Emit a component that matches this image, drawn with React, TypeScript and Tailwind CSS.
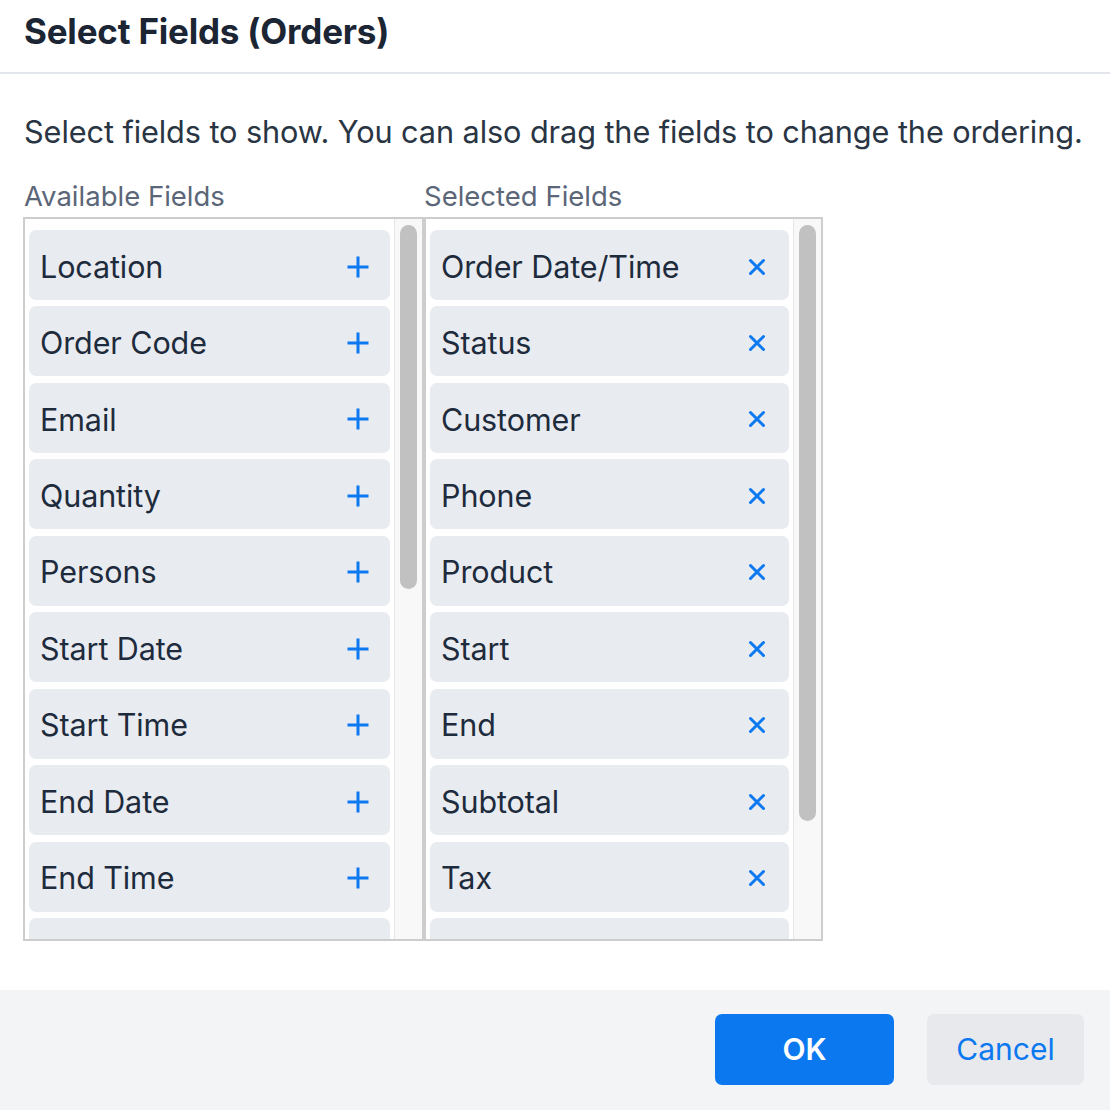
import React from "react";

const available = ["Location", "Order Code", "Email", "Quantity", "Persons", "Start Date", "Start Time", "End Date", "End Time", ""];
const selected = ["Order Date/Time", "Status", "Customer", "Phone", "Product", "Start", "End", "Subtotal", "Tax", ""];

function PlusIcon() {
  return (
    <svg width="24" height="24" viewBox="0 0 24 24" fill="none" stroke="#0d79f0" strokeWidth="3">
      <path d="M12 1.5v21M1.5 12h21" />
    </svg>
  );
}

function XIcon() {
  return (
    <svg width="18" height="18" viewBox="0 0 18 18" fill="none" stroke="#0d79f0" strokeWidth="3" strokeLinecap="round">
      <path d="M2.5 2.5l13 13M15.5 2.5l-13 13" />
    </svg>
  );
}

function FieldColumn({ items, kind, thumbH, width }: { items: string[]; kind: "add" | "remove"; thumbH: number; width: string }) {
  return (
    <div className={`${width} h-[724px] border-2 border-[#cdcdcd] flex overflow-hidden`}>
      <div className="flex-1 flex flex-col gap-[6.44px] pl-[4px] pr-[4px] pt-[11px]">
        {items.map((label, i) => (
          <div key={i} className="h-[70px] shrink-0 rounded-[7px] bg-[#e8ebf0] flex items-center justify-between pl-[11px] pr-[20px] pt-[3px]">
            <span className="text-[30.5px] text-[#1e2b3c] tracking-[-0.1px]">{label}</span>
            {label && (kind === "add" ? <span className="flex"><PlusIcon /></span> : <span className="pr-[3px] flex"><XIcon /></span>)}
          </div>
        ))}
      </div>
      <div className="w-[28px] shrink-0 bg-[#f8f8f8] border-l border-[#e6e6e6] pt-[6px] flex justify-center">
        <div className="w-[17px] rounded-full bg-[#c1c1c1]" style={{ height: thumbH }} />
      </div>
    </div>
  );
}

export default function App() {
  return (
    <div className="w-[1110px] h-[1110px] bg-white flex flex-col" style={{ fontFamily: "Inter, 'Noto Sans', sans-serif" }}>
      <div className="h-[74px] shrink-0 border-b-2 border-[#e3e6ea] flex items-center px-6 pb-[10px]">
        <h1 className="text-[35px] font-bold text-[#1b2533] tracking-[-0.2px]">Select Fields (Orders)</h1>
      </div>
      <div className="flex-1 px-6 pt-[38px]">
        <p className="text-[30.7px] text-[#2a3544] leading-[40px] tracking-[-0.1px]">
          Select fields to show. You can also drag the fields to change the ordering.
        </p>
        <div className="flex mt-[27px] text-[27.5px] text-[#5b6678] leading-[34px]">
          <div className="w-[400px]">Available Fields</div>
          <div>Selected Fields</div>
        </div>
        <div className="flex mt-[4px] -ml-[1px]">
          <FieldColumn items={available} kind="add" thumbH={364} width="w-[401px]" />
          <FieldColumn items={selected} kind="remove" thumbH={596} width="w-[399px]" />
        </div>
      </div>
      <div className="h-[120px] shrink-0 bg-[#f3f4f6] flex items-start justify-end gap-[33px] pt-[24px] pr-[26px]">
        <button className="w-[179px] h-[71px] rounded-[7px] bg-[#0c78f0] text-white text-[30px] font-semibold">OK</button>
        <button className="w-[157px] h-[71px] rounded-[7px] bg-[#e7e9ed] text-[#0c78f0] text-[30px]">Cancel</button>
      </div>
    </div>
  );
}
